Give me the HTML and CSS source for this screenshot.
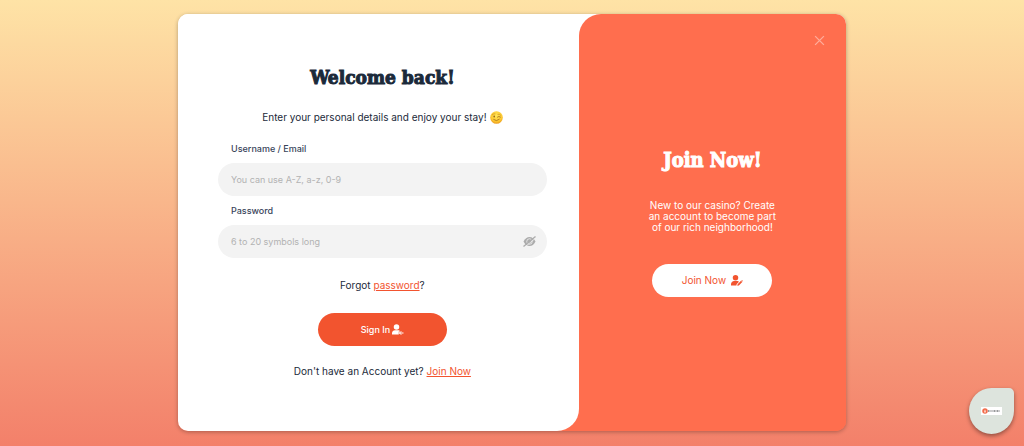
FILE: index.html
```html
<!DOCTYPE html>
<html lang="en">
<head>
    <meta charset="UTF-8">
    <meta name="viewport" content="width=device-width, initial-scale=1.0">
    <title>Sign In</title>
    <link rel="stylesheet" href="styles.css">
</head>
<body>
    <main class="card">
        <section class="signin">
            <h1>Welcome back!</h1>
            <p class="intro">
                Enter your personal details and enjoy your stay!
                <svg class="emoji" viewBox="0 0 28 28" role="img" aria-label="Winking face">
                    <defs>
                        <radialGradient id="face" cx="50%" cy="35%" r="65%">
                            <stop offset="0" stop-color="#ffe65a"/>
                            <stop offset="0.7" stop-color="#fdc830"/>
                            <stop offset="1" stop-color="#ea9a1c"/>
                        </radialGradient>
                    </defs>
                    <circle cx="14" cy="14" r="13.5" fill="url(#face)"/>
                    <path d="M5 8q3-3 6-2M17 7q4-1 6 2" fill="none" stroke="#c98a1e" stroke-width="1.4" stroke-linecap="round"/>
                    <ellipse cx="9" cy="12" rx="1.6" ry="2.2" fill="#8a5a18"/>
                    <path d="M16 13q3-3 6.5 0M8 18.5q6 5 12-0.5" fill="none" stroke="#96621a" stroke-width="1.6" stroke-linecap="round"/>
                </svg>
            </p>
            <form id="signinForm">
                <label for="username">Username / Email</label>
                <div class="field">
                    <input type="text" id="username" name="username" placeholder="You can use A-Z, a-z, 0-9">
                </div>

                <label for="password">Password</label>
                <div class="field">
                    <input type="password" id="password" name="password" placeholder="6 to 20 symbols long">
                    <button type="button" class="toggle" aria-label="Show password">
                        <svg viewBox="0 0 26 22">
                            <path d="M1 11C4 5 8 2 13 2s9 3 12 9c-3 6-7 9-12 9S4 17 1 11z" fill="#acacac"/>
                            <circle cx="13" cy="11" r="5.5" fill="none" stroke="#f3f3f3" stroke-width="1.6"/>
                            <path d="M3 22.5L26 3.5" stroke="#f3f3f3" stroke-width="1.6"/>
                            <path d="M1 21L25 1" stroke="#acacac" stroke-width="2.6"/>
                        </svg>
                    </button>
                </div>

                <p class="forgot">Forgot <a href="#">password</a>?</p>
                <button type="submit" class="btn btn-signin">
                    Sign In
                    <svg viewBox="0 0 24 22">
                        <circle cx="9" cy="6" r="5.5" fill="currentColor"/>
                        <path d="M0 21v-2.500C0 15 3 12.500 6 12.500h6c2 0 3.500 1 4.500 2.500h-3v6z" fill="currentColor"/>
                        <path d="M14 18h9M18.500 14.500L15 18l3.500 3.500" fill="none" stroke="currentColor" stroke-width="2"/>
                    </svg>
                </button>
            </form>
            <p class="account">Don't have an Account yet? <a href="#">Join Now</a></p>
        </section>

        <section class="join">
            <button type="button" class="close" aria-label="Close">
                <svg viewBox="0 0 10 10">
                    <path d="M1 1l8 8M9 1l-8 8" stroke="#ffab99" stroke-width="1.2"/>
                </svg>
            </button>
            <h2>Join Now!</h2>
            <p>New to our casino? Create an account to become part of our rich neighborhood!</p>
            <button type="button" class="btn btn-join">
                Join Now
                <svg viewBox="0 0 24 22">
                    <circle cx="9" cy="5.5" r="5.5" fill="currentColor"/>
                    <path d="M0 21v-2.500C0 15 3 12 6 12h6c2 0 3 0.500 4 1.500L11.500 18l-0.800 3z" fill="currentColor"/>
                    <path d="M12.500 21.500l0.800-3.200 6.700-6.700 2.500 2.500-6.700 6.700zM20.800 10.800l1-1 2.200 2.200-1 1z" fill="currentColor"/>
                </svg>
            </button>
        </section>
    </main>

    <a href="#" class="badge" aria-label="Games">
        <span class="logo">
            <svg viewBox="0 0 12 12">
                <circle cx="6" cy="6" r="5.5" fill="#f26b4a"/>
                <path d="M6 3L8 6v3H4V6z" fill="#fbc9b8"/>
            </svg>
            <svg class="wordmark" viewBox="0 0 26 8">
                <path d="M0 4h7M9 4h2M12 4h12" stroke="#77797b" stroke-width="3" stroke-dasharray="2 1"/>
            </svg>
        </span>
    </a>
</body>
</html>
```
FILE: styles.css
```css
* {
    box-sizing: border-box;
}
body {
    font-family: Inter, "Liberation Sans", sans-serif;
    font-size: 10px;
    line-height: 16px;
    color: #1b2a3a;
    margin: 0;
    padding: 14px 16px;
    min-height: 100vh;
    background: linear-gradient(#fee3a6, #f3806a);
}
h1, h2, p {
    margin: 0;
}
h1, h2 {
    font-family: "DejaVu Serif Condensed", "DejaVu Serif", serif;
    font-size: 19px;
    font-weight: bold;
    line-height: 28px;
    -webkit-text-stroke: 1px currentColor;
}
a {
    color: #f2542f;
}
button {
    font-family: inherit;
    border: none;
    cursor: pointer;
}
.card {
    display: grid;
    grid-template-columns: 3fr 2fr;
    max-width: 668px;
    margin: 0 auto;
    border-radius: 10px;
    /* white shows behind the join corner, orange behind the sign in corner */
    background: linear-gradient(#fff 50%, #ff6e4e 50%);
    box-shadow: 0 1px 4px rgba(0, 0, 0, 0.3);
    overflow: hidden;
}
.signin {
    padding: 49px 32px 52px 40px;
    text-align: center;
    background-color: #fff;
    border-bottom-right-radius: 22px;
}
.intro {
    display: flex;
    justify-content: center;
    align-items: center;
    gap: 3px;
    margin: 18px 0;
}
.emoji {
    width: 13px;
    height: 13px;
}
label {
    display: block;
    margin: 0 13px 8px;
    font-size: 9px;
    font-weight: 500;
    line-height: 12px;
    color: #39445a;
    text-align: left;
}
.field {
    display: flex;
    align-items: center;
    height: 33px;
    margin-bottom: 9px;
    padding: 0 11px 0 13px;
    border-radius: 17px;
    background-color: #f3f3f3;
}
.field input {
    flex: 1;
    min-width: 0;
    padding: 0;
    border: none;
    outline: none;
    background: none;
    font-family: inherit;
    font-size: 9px;
    color: #1b2a3a;
}
.field input::placeholder {
    color: #b2b2b2;
}
.toggle {
    display: flex;
    padding: 0;
    background: none;
}
.toggle svg {
    width: 13px;
    height: 11px;
}
.forgot {
    margin: 19px 0 20px;
}
.btn {
    display: inline-flex;
    justify-content: center;
    align-items: center;
    height: 33px;
    padding: 0;
    border-radius: 17px;
}
.btn svg {
    width: 12px;
    height: 11px;
}
.btn-signin {
    width: 129px;
    gap: 2px;
    background-color: #f2542f;
    color: #fff;
    font-size: 9px;
    font-weight: 500;
}
.account {
    margin-top: 17px;
}
.join {
    position: relative;
    display: flex;
    flex-direction: column;
    justify-content: center;
    align-items: center;
    padding-bottom: 3px;
    border-top-left-radius: 22px;
    background-color: #ff6e4e;
    color: #fff;
    text-align: center;
}
.join h2 {
    font-size: 20px;
}
.close {
    position: absolute;
    top: 21px;
    right: 21px;
    display: flex;
    padding: 0;
    background: none;
}
.close svg {
    width: 11px;
    height: 11px;
}
.join p {
    width: 130px;
    margin: 26px 0 31px;
    line-height: 11px;
}
.btn-join {
    width: 120px;
    gap: 5px;
    background-color: #fff;
    color: #f2542f;
    font-size: 10px;
}
.badge {
    position: fixed;
    right: 10px;
    bottom: 12px;
    display: flex;
    justify-content: center;
    align-items: center;
    width: 45px;
    height: 46px;
    border-radius: 50% 5px 50% 50%;
    background-color: #dde4dd;
    box-shadow: 0 2px 4px rgba(0, 0, 0, 0.4);
}
.logo {
    display: flex;
    align-items: center;
    width: 21px;
    height: 8px;
    padding: 0 1px;
    background-color: #fff;
}
.logo svg {
    width: 6px;
    height: 6px;
}
.logo .wordmark {
    width: 13px;
    height: 4px;
}
```
